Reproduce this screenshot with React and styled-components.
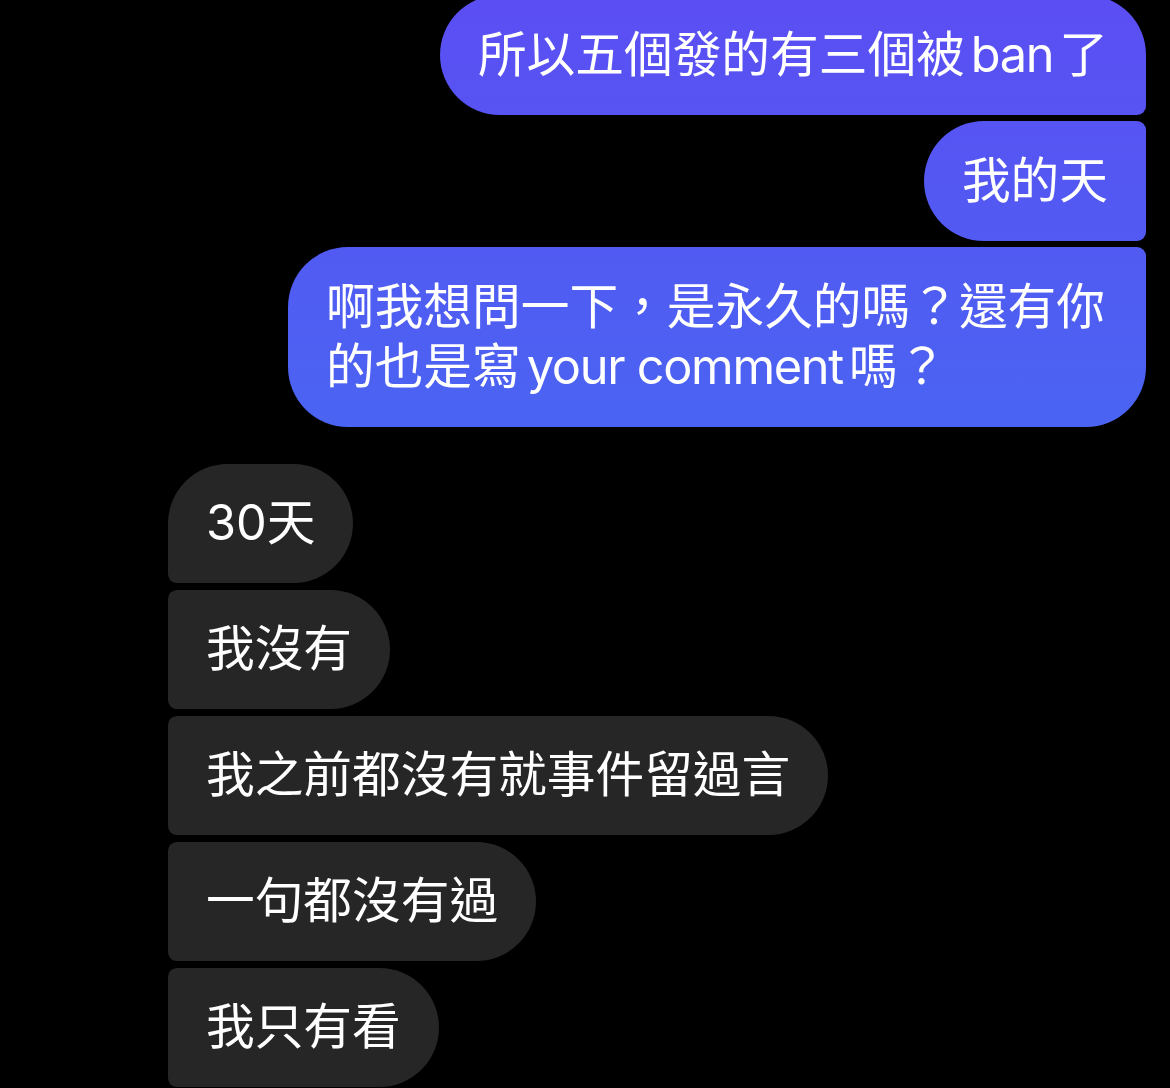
import React from "react";
import styled, { createGlobalStyle, css } from "styled-components";

const GlobalStyle = createGlobalStyle`
  html, body {
    margin: 0;
    padding: 0;
    background: #000;
  }
  body {
    font-family: Inter, "Noto Sans CJK TC", "Noto Sans", sans-serif;
    -webkit-font-smoothing: antialiased;
  }
`;

const Thread = styled.div`
  display: flex;
  flex-direction: column;
  gap: 37px;
  margin-top: -5px;
  overflow: hidden;
  height: 1093px;
`;

const Group = styled.div`
  display: flex;
  flex-direction: column;
  gap: 6.5px;
  align-items: ${(p) => (p.$mine ? "flex-end" : "flex-start")};
  padding: ${(p) => (p.$mine ? "0 24px 0 0" : "0 0 0 168px")};
`;

const BIG = "60px";
const SMALL = "9px";

const Bubble = styled.div`
  box-sizing: border-box;
  max-width: 858px;
  padding: 29.75px 38px;
  font-size: 48.7px;
  line-height: 60px;
  color: #fff;
  font-weight: 400;

  ${(p) =>
    p.$mine
      ? css`
          background: linear-gradient(180deg, #5b4ef3 0px, #4a64f2 430px);
          background-attachment: fixed;
          border-radius: ${BIG}
            ${p.$pos === "first" || p.$pos === "only" ? BIG : SMALL}
            ${p.$pos === "last" || p.$pos === "only" ? BIG : SMALL} ${BIG};
        `
      : css`
          background: #262626;
          border-radius: ${p.$pos === "first" || p.$pos === "only" ? BIG : SMALL}
            ${BIG} ${BIG}
            ${p.$pos === "last" || p.$pos === "only" ? BIG : SMALL};
        `}
`;

// latin words inside chinese text: a small gap each side, tighter tracking
const Latin = styled.span`
  letter-spacing: -1.3px;
  margin: 0 6px;
`;

const mine = [
  <>所以五個發的有三個被<Latin>ban</Latin>了</>,
  <>我的天</>,
  <>啊我想問一下，是永久的嗎？還有你的也是寫<Latin>your comment</Latin>嗎？</>,
];

const theirs = [
  <>30天</>,
  <>我沒有</>,
  <>我之前都沒有就事件留過言</>,
  <>一句都沒有過</>,
  <>我只有看</>,
];

const posOf = (i, len, openEnd) => {
  if (i === 0) return "first";
  if (i === len - 1 && !openEnd) return "last";
  return "middle";
};

export default function App() {
  return (
    <>
      <GlobalStyle />
      <Thread>
        <Group $mine>
          {mine.map((t, i) => (
            <Bubble key={i} $mine $pos={posOf(i, mine.length)}>
              {t}
            </Bubble>
          ))}
        </Group>
        <Group>
          {theirs.map((t, i) => (
            <Bubble key={i} $pos={posOf(i, theirs.length, true)}>
              {t}
            </Bubble>
          ))}
        </Group>
      </Thread>
    </>
  );
}
